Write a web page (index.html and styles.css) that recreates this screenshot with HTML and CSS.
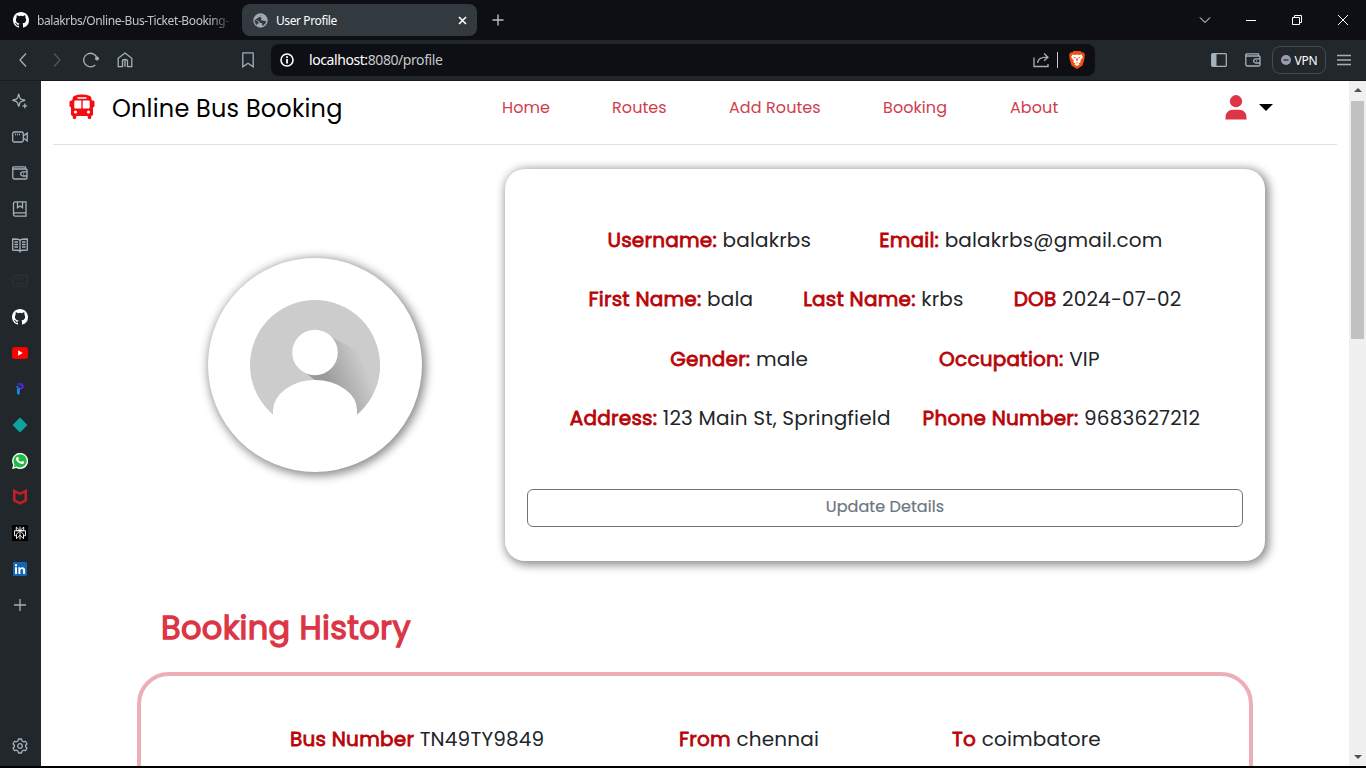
FILE: index.html
```html
<!DOCTYPE html>
<html lang="en">
<head>
<meta charset="utf-8">
<title>User Profile</title>
<link rel="stylesheet" href="styles.css">
</head>
<body>
<svg class="defs" width="0" height="0">
  <symbol id="github" viewBox="0 0 16 16"><path fill="#fff" d="M8 0C3.58 0 0 3.58 0 8c0 3.54 2.29 6.53 5.47 7.59.4.07.55-.17.55-.38 0-.19-.01-.82-.01-1.49-2.01.37-2.53-.49-2.69-.94-.09-.23-.48-.94-.82-1.13-.28-.15-.68-.52-.01-.53.63-.01 1.08.58 1.23.82.72 1.21 1.87.87 2.33.66.07-.52.28-.87.51-1.07-1.78-.2-3.64-.89-3.64-3.95 0-.87.31-1.59.82-2.15-.08-.2-.36-1.02.08-2.12 0 0 .67-.21 2.2.82a7.4 7.4 0 0 1 4 0c1.53-1.04 2.2-.82 2.2-.82.44 1.1.16 1.92.08 2.12.51.56.82 1.27.82 2.15 0 3.07-1.87 3.75-3.65 3.95.29.25.54.73.54 1.48 0 1.07-.01 1.93-.01 2.2 0 .21.15.46.55.38A8.01 8.01 0 0 0 16 8c0-4.42-3.58-8-8-8z"/></symbol>
  <symbol id="wallet" viewBox="0 0 16 16"><path d="M.8 3.500V12.500a1.500 1.500 0 0 0 1.500 1.500h11.500a1.200 1.200 0 0 0 1.200-1.200V5.200A1.200 1.200 0 0 0 13.800 4H1.800A1.100 1.100 0 0 1 1.800 1.800h11a.8.8 0 0 1 .8.8V4M15 6.800h-4.200a2 2 0 0 0 0 4.200H15zM11 8.900h1"/></symbol>
</svg>

<header class="tabs">
  <div class="tab tab-idle"><svg width="16" height="16"><use href="#github"/></svg><span class="tab-title">balakrbs/Online-Bus-Ticket-Booking-</span></div>
  <div class="tab tab-active">
    <svg width="15" height="15" viewBox="0 0 15 15"><circle cx="7.500" cy="7.500" r="7.200" fill="#a3abb1"/><path fill="#323a3f" d="M9.500 1.800c-.8 1-2.700.6-2.600 1.900.1 1 1.400.4 1.700 1.300.2.900-1 1.200-.4 2 .8.900 1.900.1 2.800.7.700.5 1.300.2 2.200.2-.3 2.400-1.800 4.100-3.900 4.900-.4-.7.300-1.900-.5-2.500-.6-.5-1.900-.1-2.100-1.100-.2-1.300-2.600-1.900-5.200-1.900 1.600.5 3.200.7 4.200 1.800.5.600-.2 1.500-1 1.700-.7.200-.5.900-.6 1.400C2.600 11.200 1.500 9.400 1.500 7.300z"/></svg>
    <span class="tab-name">User Profile</span>
    <svg class="tab-close" width="9" height="9" viewBox="0 0 9 9"><path d="M1 1l7 7M8 1L1 8" stroke="#fff" stroke-width="1.600"/></svg>
  </div>
  <svg class="tab-new" width="12" height="12" viewBox="0 0 12 12"><path d="M6 .5v11M.5 6h11" stroke="#b9bfc4" stroke-width="1.400"/></svg>
  <div class="window-buttons">
    <svg width="12" height="12" viewBox="0 0 12 12"><path d="M1 3.500l5 5 5-5"/></svg>
    <svg width="12" height="12" viewBox="0 0 12 12"><path d="M1 6.500h10"/></svg>
    <svg width="12" height="12" viewBox="0 0 12 12"><path d="M1.500 3.500h7v7h-7zM3.500 3.500v-2h7v7h-2"/></svg>
    <svg width="12" height="12" viewBox="0 0 12 12"><path d="M1 1l10 10M11 1L1 11"/></svg>
  </div>
</header>

<div class="toolbar">
  <svg class="icon back" width="16" height="16" viewBox="0 0 16 16"><path d="M11 1.500L5 8l6 6.500"/></svg>
  <svg class="icon forward" width="16" height="16" viewBox="0 0 16 16"><path d="M5 1.500L11 8l-6 6.500"/></svg>
  <svg class="icon reload" width="16" height="16" viewBox="0 0 16 16"><path d="M12.200 13A6.800 6.800 0 1 1 14 6"/><circle cx="14" cy="6.500" r="2" fill="#a3b1ba" stroke="none"/></svg>
  <svg class="icon home" width="16" height="16" viewBox="0 0 16 16"><path d="M1.200 6.200L8 1l6.800 5.200v8.500h-4.300V9.200c0-2.300-5-2.300-5 0v5.500H1.200zM8 8.500v6.200"/></svg>
  <svg class="icon bookmark" width="16" height="16" viewBox="0 0 16 16"><path d="M3.300.8h9.400a.5.500 0 0 1 .5.500v13.400L8 11.300l-5.200 3.400V1.300a.5.500 0 0 1 .5-.5z"/></svg>
  <div class="address">
    <svg width="14" height="14" viewBox="0 0 14 14"><circle cx="7" cy="7" r="6" fill="none" stroke="#fff" stroke-width="1.600"/><path d="M7 3.200v1.700M7 6v4.600" stroke="#fff" stroke-width="1.800"/></svg>
    <span class="url"><b>localhost:</b>8080/profile</span>
    <svg class="icon share" width="17" height="16" viewBox="0 0 17 16"><path d="M1 5.500v9h14V12M4.500 11c.5-4 3-5.800 9.500-5.800M11 1.500l4 3.700-4 3.600"/></svg>
    <i class="divider"></i>
    <svg width="16" height="18" viewBox="0 0 16 18"><path fill="#f04e13" d="M4.500 0h7l1.300 1.500 1.700-.2L16 4l-.6 1.600.3 1.500-2.200 7.300L8 18l-5.500-3.600L.3 7.100l.3-1.500L0 4l1.500-2.700 1.700.2z"/><path fill="#fff" d="M3.600 3.500L6 3.900 8 3.500l2 .4 2.400-.4 1.500 2.500-2.600 3.700.4 1.600-2.200 1.100 1 1L8 15l-2.500-1.600 1-1-2.200-1.100.4-1.600L2.100 6z"/><path fill="#f04e13" d="M4 5.700l2.700.5-.6 1.200zM12 5.700l-2.700.5.600 1.200zM7.400 6.500L7 9.200l1 .7 1-.7-.4-2.700-.6 1.700zM5.800 10.700L8 11.700l2.200-1L8 12.600z"/></svg>
  </div>
  <svg class="icon panel" width="16" height="16" viewBox="0 0 16 16"><rect x=".7" y="1.700" width="14.600" height="12.600" rx="1"/><path fill="#a3b1ba" stroke="none" d="M1 2h4.500v12H1z"/></svg>
  <svg class="icon" width="16" height="16"><use href="#wallet"/></svg>
  <div class="vpn"><svg width="10" height="10" viewBox="0 0 10 10"><circle cx="5" cy="5" r="5" fill="#9b9daf"/><path d="M2.500 5h5" stroke="#32363d" stroke-width="1.400"/></svg><span>VPN</span></div>
  <svg class="icon menu" width="14" height="12" viewBox="0 0 14 12"><path d="M0 1.500h14M0 6h14M0 10.500h14"/></svg>
</div>

<div class="workspace">
  <aside class="rail">
    <div><svg class="icon" width="16" height="16" viewBox="0 0 16 16"><path d="M6.700 1.200c.3 0 .6 2 1 3.200.4 1 1 1.600 2 2 1 .3 3.200.6 3.200.9s-2.200.6-3.200 1c-1 .3-1.600.9-2 1.900-.4 1.200-.7 3.200-1 3.200s-.6-2-1-3.200c-.4-1-1-1.600-2-2-1-.3-3-.6-3-.9s2-.6 3-1c1-.3 1.600-.9 2-1.900.4-1.200.7-3.200 1-3.200zM12.800 10.500v4.800M10.400 12.900h4.800"/></svg></div>
    <div><svg class="icon" width="16" height="16" viewBox="0 0 16 16"><rect x=".7" y="3" width="10.600" height="10" rx="1.500"/><path d="M11.300 7l3.900-3v8l-3.900-3M3 5.500h1M5 5.500h1M7 5.500h1"/></svg></div>
    <div><svg class="icon" width="16" height="16"><use href="#wallet"/></svg></div>
    <div><svg class="icon" width="16" height="16" viewBox="0 0 16 16"><path d="M3 .8h11v11H3.200a1.700 1.700 0 0 0 0 3.400H14v-3.400M1.500 13.500V2.500A1.700 1.700 0 0 1 3.200.8M5.500 1v5.800L8 5l2.500 1.800V1"/></svg></div>
    <div><svg class="icon" width="16" height="16" viewBox="0 0 16 16"><path d="M8 3.200C6.500 2 4 2 .7 2v11c3.300 0 5.800 0 7.300 1 1.500-1 4-1 7.300-1V2C12 2 9.500 2 8 3.200zM8 3v12.500M2.500 5H6M2.500 7.500H6M2.500 10H6M10 5h3.500M10 7.500h3.500M10 10h3.500"/></svg></div>
    <div><svg class="icon dim" width="16" height="16" viewBox="0 0 16 16"><rect x=".7" y="2.500" width="14.600" height="11" rx="1"/><path d="M3 5.500h3M3 10.500h10M8 5.500h4"/></svg></div>
    <div><svg width="16" height="16"><use href="#github"/></svg></div>
    <div><svg width="16" height="12" viewBox="0 0 16 12"><rect width="16" height="12" rx="3" fill="red"/><path fill="#fff" d="M6.200 3.300v5.400L10.700 6z"/></svg></div>
    <div><svg width="10" height="14" viewBox="0 0 10 14"><path fill="#5a1fd0" d="M1 2.500C2.500.6 8.700.2 8.800 4c.1 2.700-1.800 3.700-4 3.800V5.600c1.200-.1 1.800-.6 1.600-1.300C6 2.800 3.300 2.500 1 2.500z"/><path fill="#168be8" d="M1.200 4.800c.9-.9 1.700-1 2.600-.9L2 6.500zM2 8.300c0-1.700 1-2.600 2.800-2.700v5.500c0 2-2.800 2-2.800 0z"/></svg></div>
    <div><svg width="16" height="16" viewBox="0 0 16 16"><rect x="2.700" y="2.700" width="10.600" height="10.600" rx=".8" fill="#0da49d" transform="rotate(45 8 8)"/></svg></div>
    <div><svg width="16" height="16" viewBox="0 0 16 16"><path fill="#fff" d="M0 16l1.200-4A8 8 0 1 1 4.300 15z"/><path fill="#1fb943" d="M1.800 14.200l.8-2.700a6.600 6.600 0 1 1 2.100 2z"/><path fill="#fff" d="M5.500 3.900c.6-.2.900.3 1.300 1.300.2.500-.5.900-.6 1.300.6 1.200 1.500 2 2.800 2.500.6-.2.800-1.100 1.300-.9 1.700.7 1.900.8 1.800 1.300-.3 1.400-1.700 1.900-3.200 1.400-2.600-.8-4.300-2.400-5-4.200-.4-1 .4-2.300 1.600-2.700z"/></svg></div>
    <div><svg width="14" height="16" viewBox="0 0 14 16"><path fill="none" stroke="#bd2025" stroke-width="2.600" d="M1.300 1.900v9.500L7 14.300l5.700-2.900V1.900L7 4.800z"/></svg></div>
    <div><svg width="16" height="16" viewBox="0 0 16 16"><rect width="16" height="16" fill="#000"/><path fill="none" stroke="#fff" stroke-width=".9" d="M8 1.500v13M4.300 2l3.700 3.700L11.700 2v3.700H4.300zM2.500 5.700h11v5h-2M2.500 5.700v5h2M8 5.700L4.500 9.200v4.500L8 10.200l3.500 3.500V9.200z"/></svg></div>
    <div><svg width="14" height="14" viewBox="0 0 14 14"><rect width="14" height="14" rx="1" fill="#1266b6"/><path fill="#fff" d="M2 5.300h2V12H2zM2 2.300h2v1.900H2zM5.400 5.300h2v.9c1.200-1.700 4.700-1.400 4.700 1.800v4h-2V8.500c0-2-2.700-2-2.700 0V12h-2z"/></svg></div>
    <div><svg class="icon" width="12" height="12" viewBox="0 0 12 12"><path d="M6 0v12M0 6h12"/></svg></div>
    <div class="rail-settings"><svg class="icon" width="16" height="16" viewBox="0 0 16 16"><path stroke-linejoin="round" d="M6.500 1h3l.6 2 1.400.8 2-.5L15 6l-1.400 1.300v1.400L15 10l-1.500 2.700-2-.5-1.400.8-.6 2h-3l-.6-2-1.400-.8-2 .5L1 10l1.400-1.300V7.300L1 6l1.500-2.700 2 .5L5.900 3z"/><circle cx="8" cy="8" r="2.300"/></svg></div>
  </aside>

  <main class="page">
    <nav class="navbar">
      <svg class="bus" width="26" height="26" viewBox="0 0 26 26"><path fill="#f20d10" d="M4 3c2-3.500 16-3.500 18 0l.8 3.500H24A1.500 1.500 0 0 1 25.500 8v4a1.500 1.500 0 0 1-1.500 1.300v7c0 1-.8 1.700-1.700 1.700v1.800a1.800 1.800 0 0 1-3.500 0v-1.800H7.200v1.800a1.800 1.800 0 0 1-3.500 0v-1.800c-.9 0-1.700-.7-1.700-1.700v-7A1.500 1.500 0 0 1 .5 12V8A1.500 1.500 0 0 1 2 6.500h1.200z"/><path fill="#fff" d="M8.500 3.300h9v1.400h-9zM5.300 7.500a1 1 0 0 1 1-1h6v8h-6a1 1 0 0 1-1-1zM13.700 6.500h6a1 1 0 0 1 1 1v6a1 1 0 0 1-1 1h-6z"/><circle cx="6.500" cy="18" r="1.600" fill="#fff"/><circle cx="19.500" cy="18" r="1.600" fill="#fff"/></svg>
      <span class="brand">Online Bus Booking</span>
      <div class="links"><a class="home-link">Home</a><a class="routes-link">Routes</a><a class="add-link">Add Routes</a><a class="booking-link">Booking</a><a>About</a></div>
      <div class="account"><svg width="22" height="25" viewBox="0 0 22 25"><circle cx="11" cy="6.200" r="6.100" fill="#dc3545"/><path fill="#dc3545" d="M.5 24.500v-2c0-4.500 3-7.700 7.500-7.700h6c4.500 0 7.500 3.200 7.500 7.700v2z"/></svg><i class="caret"></i></div>
    </nav>

    <section class="profile">
      <div class="avatar">
        <svg width="214" height="214" viewBox="0 0 214 214">
          <defs>
            <linearGradient id="shade" gradientUnits="userSpaceOnUse" x1="114" y1="116" x2="154" y2="100"><stop stop-color="#999"/><stop offset="1" stop-color="#ccc"/></linearGradient>
            <clipPath id="disc"><circle cx="107" cy="107" r="65"/></clipPath>
          </defs>
          <circle cx="107" cy="107" r="65" fill="#ccc"/>
          <g clip-path="url(#disc)">
            <path fill="url(#shade)" d="M125 80L175 106V170H149L108 123L98 115z"/>
            <path fill="#fff" stroke="#fff" stroke-width="2" d="M66 180V152C67 137 84 123 107 123s41 14 41 29v28z"/>
            <circle cx="107" cy="94.500" r="22.800" fill="#fff"/>
          </g>
          <path fill="#fff" d="M65.500 156.500h83V174h-83z"/>
        </svg>
      </div>
      <div class="card">
        <div class="row row-login"><p class="username"><b>Username:</b> <span>balakrbs</span></p><p class="email"><b>Email:</b> <span>balakrbs@gmail.com</span></p></div>
        <div class="row row-names"><p class="first"><b>First Name:</b> <span>bala</span></p><p class="last"><b>Last Name:</b> <span>krbs</span></p><p class="dob"><b>DOB</b> <span>2024-07-02</span></p></div>
        <div class="row row-work"><p class="gender"><b>Gender:</b> <span>male</span></p><p class="job"><b>Occupation:</b> <span>VIP</span></p></div>
        <div class="row row-contact"><p class="street"><b>Address:</b> <span>123 Main St, Springfield</span></p><p class="phone"><b>Phone Number:</b> <span>9683627212</span></p></div>
        <button class="update">Update Details</button>
      </div>
    </section>

    <h2 class="history-title">Booking History</h2>
    <section class="history">
      <p class="bus-number"><b>Bus Number</b> <span>TN49TY9849</span></p>
      <p class="from"><b>From</b> <span>chennai</span></p>
      <p class="to"><b>To</b> <span>coimbatore</span></p>
    </section>
  </main>
  <div class="scrollbar"><i class="up"></i><i class="thumb"></i><i class="down"></i></div>
</div>
</body>
</html>
```
FILE: styles.css
```css
* { box-sizing: border-box; }
body {
  margin: 0;
  width: 1366px;
  height: 768px;
  overflow: hidden;
  display: flex;
  flex-direction: column;
  background: #000;
  color: #212529;
  font-family: Poppins, Inter, sans-serif;
}
svg { display: block; flex: none; }
p, h2 { margin: 0; }
.defs { position: absolute; }
.icon { fill: none; stroke: #a3b1ba; stroke-width: 1.3; }

.tabs {
  height: 40px;
  flex: none;
  display: flex;
  align-items: center;
  background: #0d0f14;
  font: 12px "Noto Sans", sans-serif;
  color: #fff;
}
.tab { display: flex; align-items: center; gap: 8px; white-space: nowrap; }
.tab-idle { width: 242px; padding-left: 13px; }
.tab-title {
  width: 192px;
  overflow: hidden;
  letter-spacing: -.4px;
  color: #c3c5c8;
  -webkit-mask-image: linear-gradient(90deg, #000 90%, transparent 102%);
}
.tab-active { width: 235px; height: 32px; padding: 0 10px 0 11px; border-radius: 8px; background: #323a3f; }
.tab-name { letter-spacing: -.4px; }
.tab-close { margin-left: auto; }
.tab-new { margin-left: 15px; }
.window-buttons { display: flex; gap: 34px; margin: 0 17px 0 auto; fill: none; stroke: #fff; stroke-width: 1; }

.toolbar { height: 41px; flex: none; display: flex; align-items: center; padding: 0 15px; background: #22272b; border-bottom: 1px solid #191b1e; }
.forward { margin-left: 18px; opacity: .35; }
.reload { margin-left: 18px; }
.home { margin-left: 18px; }
.bookmark { margin-left: 107px; }
.address {
  width: 824px;
  height: 32px;
  margin: 0 116px 0 15px;
  padding: 0 10px 0 9px;
  display: flex;
  align-items: center;
  border-radius: 8px;
  background: #0d0f14;
  font: 14px "Noto Sans", sans-serif;
  color: #c6c8ca;
}
.url { margin: 0 auto 1px 15px; letter-spacing: -.42px; }
.url b { font-weight: 400; color: #fff; }
.divider { width: 1px; height: 16px; margin: 0 11px 0 7px; background: #c6c8ca; }
.panel { margin-right: 18px; }
.vpn {
  width: 54px;
  height: 28px;
  margin: 0 11px;
  display: flex;
  align-items: center;
  justify-content: center;
  gap: 4px;
  flex: none;
  border: 1px solid #464b50;
  border-radius: 8px;
  font: 12px "Noto Sans", sans-serif;
  letter-spacing: -.2px;
  color: #fff;
}

.workspace { height: 685px; flex: none; display: flex; }
.rail { width: 41px; padding-top: 2px; display: flex; flex-direction: column; background: #22272b; }
.rail div { width: 40px; height: 36px; flex: none; display: flex; align-items: center; justify-content: center; }
.dim { opacity: .06; }
.rail .rail-settings { margin: auto 0 2px; }

.page { width: 1308px; overflow: hidden; background: #fff; white-space: nowrap; }
.navbar { height: 64px; margin: 0 12px; padding: 0 0 11px 16px; display: flex; align-items: center; border-bottom: 1px solid #dee2e6; }
.brand { width: 390px; margin-left: 17px; padding-top: 2px; font-size: 24px; letter-spacing: .2px; color: #000; }
.links { display: flex; font-size: 16px; letter-spacing: .08px; color: #cf3e4c; }
.home-link { width: 110px; }
.routes-link { width: 117px; }
.add-link { width: 154px; }
.booking-link { width: 127px; }
.account { margin: 0 64px 0 auto; display: flex; align-items: center; gap: 12px; }
.caret { border: 7px solid transparent; border-top-color: #000; border-bottom: 0; }

.profile { display: flex; align-items: center; padding: 24px 84px 0 167px; }
.avatar { border-radius: 50%; background: #fff; box-shadow: 2px 2px 10px 2px rgba(0, 0, 0, .45); }
.card {
  width: 760px;
  height: 392px;
  margin-left: 83px;
  padding: 56px 22px 34px;
  border-radius: 20px;
  box-shadow: 2px 2px 10px 2px rgba(0, 0, 0, .45);
}
.row { height: 30px; margin-bottom: 29.330px; display: flex; align-items: center; justify-content: center; }
.row p, .history p { font-size: 20px; line-height: 30px; letter-spacing: .18px; }
p b { color: #b90407; font-weight: 400; letter-spacing: .24px; -webkit-text-stroke: .8px #b90407; }
.row-login { gap: 68px; }
.row-names { gap: 50px; }
.row-work { gap: 131px; }
.row-contact { gap: 32px; }
.update {
  display: block;
  width: 716px;
  height: 38px;
  margin-top: 56px;
  padding: 0 0 2px;
  border: 1px solid #6c757d;
  border-radius: 6px;
  background: none;
  color: #6c757d;
  font: 16px Poppins, Inter, sans-serif;
  letter-spacing: .08px;
  -webkit-text-stroke: .2px #6c757d;
}

.history-title { margin: 43px 0 0 120px; height: 48px; font-size: 32px; font-weight: 400; letter-spacing: .36px; -webkit-text-stroke: 1.300px #dc3545; line-height: 48px; color: #dc3545; }
.history { width: 1116px; height: 300px; margin: 20px 0 0 96px; padding: 48px 0 0 149px; display: flex; border: 4px solid #eeaeb5; border-radius: 32px; }
.bus-number { width: 389px; }
.from { width: 273px; }

.scrollbar { width: 17px; padding: 7px 2px; display: flex; flex-direction: column; background: #f0f0f0; }
.up, .down { align-self: center; border: 4px solid transparent; }
.up { border-top: 0; border-bottom-color: #505050; }
.down { border-bottom: 0; border-top-color: #505050; margin-top: auto; }
.thumb { width: 13px; height: 238px; margin-top: 9px; background: #c1c1c1; }
```
